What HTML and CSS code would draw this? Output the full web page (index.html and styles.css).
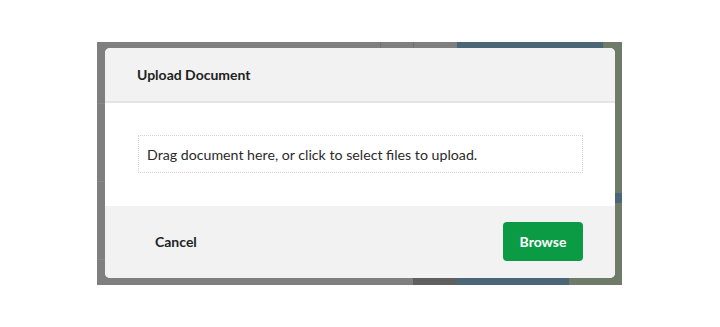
FILE: index.html
```html
<!DOCTYPE html>
<html lang="en">
<head>
    <meta charset="UTF-8">
    <title>Upload Document</title>
    <link rel="stylesheet" href="styles.css">
</head>
<body>
    <div class="Stage">
        <div class="Backdrop">
            <div class="Modal">
                <div class="Modal-head">Upload Document</div>
                <div class="Modal-body">
                    <div class="Drop">Drag document here, or click to select files to upload.</div>
                </div>
                <div class="Modal-foot">
                    <a href="#" class="btn-cancel">Cancel</a>
                    <a href="#" class="btn-browse">Browse</a>
                </div>
            </div>
        </div>
    </div>
</body>
</html>
```
FILE: styles.css
```css
body{
    margin: 0;
    background-color: #ffffff;
    font-family: Lato, "Noto Sans", sans-serif;
    color: #222222;
}
.Stage{
    padding: 42px 0 0 97px;
}
.Backdrop{
    width: 525px;
    height: 243px;
    box-sizing: border-box;
    padding: 6px 7px 7px 8px;
    background-color: #7f7f7f;
    /* the dimmed page behind the dialog */
    background-image:
        linear-gradient(#4b6777, #4b6777),
        linear-gradient(#4b6777, #4b6777),
        linear-gradient(#4b6777, #4b6777),
        linear-gradient(#6e7b68, #6e7b68),
        linear-gradient(#6e7b68, #6e7b68),
        linear-gradient(#5f5f5f, #5f5f5f),
        linear-gradient(#727272, #727272),
        linear-gradient(#727272, #727272),
        linear-gradient(#8a8a8a, #8a8a8a),
        linear-gradient(#8a8a8a, #8a8a8a),
        linear-gradient(#8a8a8a, #8a8a8a);
    background-size:
        112px 243px,
        34px 100px,
        19px 10px,
        19px 243px,
        53px 10px,
        44px 10px,
        1px 10px,
        1px 10px,
        10px 1px,
        10px 1px,
        10px 1px;
    background-position:
        360px 0,
        472px 0,
        506px 151px,
        506px 0,
        472px 233px,
        316px 233px,
        283px 0,
        316px 0,
        0 61px,
        0 139px,
        0 217px;
    background-repeat: no-repeat;
}
.Modal{
    width: 510px;
    height: 230px;
    background: #ffffff;
    border-radius: 5px;
    overflow: hidden;
    display: flex;
    flex-direction: column;
}
.Modal-head{
    height: 53px;
    padding: 0 32px;
    display: flex;
    align-items: center;
    background: #f2f2f2;
    border-bottom: 2px solid #e4e4e4;
    font-size: 14px;
    font-weight: bold;
}
.Modal-body{
    padding: 32px 32px 33px 33px;
}
.Drop{
    height: 36px;
    display: flex;
    align-items: center;
    padding: 0 8px;
    border: 1px dotted #d4d4d4;
    font-size: 14.2px;
    color: #2a2a2a;
}
.Modal-foot{
    flex: 1;
    display: flex;
    align-items: center;
    justify-content: space-between;
    padding: 0 32px 1px 50px;
    background: #f2f2f2;
}
.btn-cancel{
    color: #222222;
    text-decoration: none;
    font-size: 14px;
    font-weight: bold;
}
.btn-browse{
    width: 80px;
    height: 39px;
    display: flex;
    align-items: center;
    justify-content: center;
    background-color: #0c9b45;
    border-radius: 4px;
    color: #ffffff;
    text-decoration: none;
    font-size: 14px;
    font-weight: bold;
}
```
